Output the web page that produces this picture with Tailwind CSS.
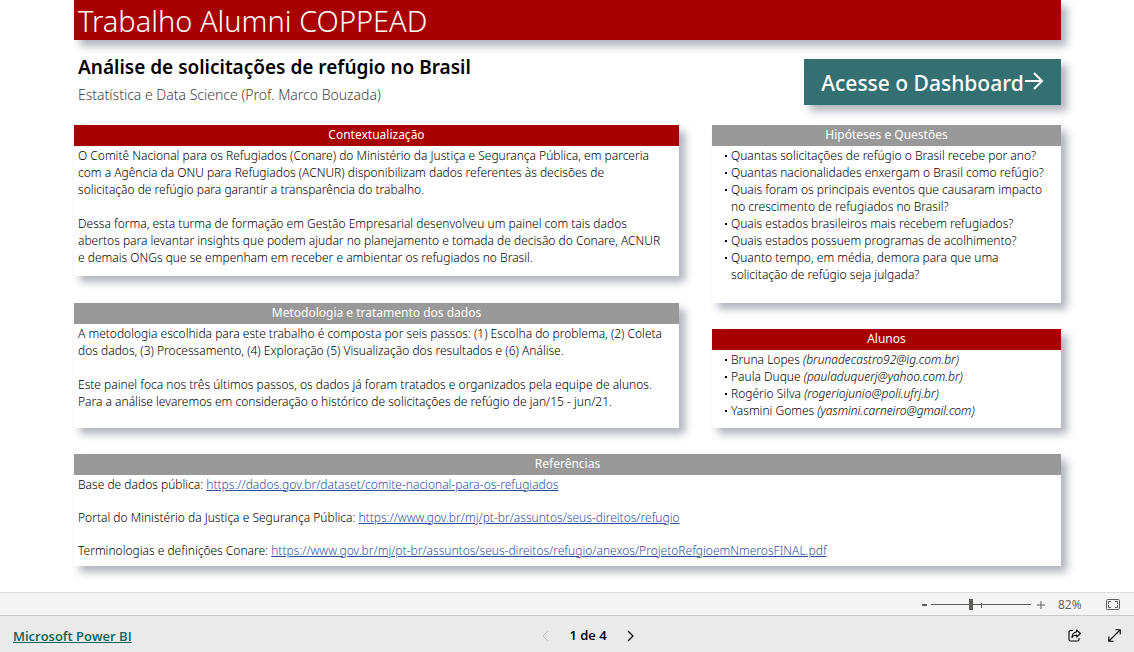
<!DOCTYPE html>
<html lang="pt-BR">
<head>
<meta charset="utf-8">
<meta name="viewport" content="width=device-width, initial-scale=1">
<title>Trabalho Alumni COPPEAD</title>
<script src="https://cdn.jsdelivr.net/npm/@tailwindcss/browser@4"></script>
</head>
<body class="flex min-h-screen flex-col bg-white font-['Noto_Sans','Open_Sans',sans-serif] text-black">
<main class="flex grow flex-col pr-[73px] pb-[26px] pl-[74px]">
  <h1 class="h-10 bg-[#a80000] px-1 text-[29px] leading-[42px] font-light text-white shadow-[6px_6px_8px_rgba(50,55,75,0.38)]">Trabalho Alumni COPPEAD</h1>

  <header class="flex items-start justify-between pt-[19px] pb-5">
    <div class="px-1">
      <h2 class="text-[19px] leading-[17px] font-semibold">Análise de solicitações de refúgio no Brasil</h2>
      <p class="mt-[9px] text-[14px] leading-5 font-light text-[#444]">Estatística e Data Science (Prof. Marco Bouzada)</p>
    </div>
    <button type="button" class="flex h-[46px] w-[257px] items-center justify-center bg-[#346f72] pt-1 text-[21px] font-medium text-white shadow-[6px_6px_8px_rgba(50,55,75,0.38)]">Acesse o Dashboard<svg class="mb-1.5 h-5 w-5" viewBox="0 0 20 20" fill="none" stroke="currentColor" stroke-width="2" aria-hidden="true"><path d="M1 10h17M10 2l8 8-8 8"/></svg></button>
  </header>

  <div class="grid grid-cols-[minmax(0,605fr)_minmax(0,349fr)] gap-x-[33px]">
    <div class="flex flex-col gap-[27px]">
      <section class="grow bg-white shadow-[6px_6px_8px_rgba(50,55,75,0.38)]">
        <h3 class="h-[21px] bg-[#a80000] text-center text-[12px] leading-5 text-white">Contextualização</h3>
        <div class="flex flex-col gap-[17px] px-1 pt-px pb-[10px] text-[12px] leading-[17px] font-light">
          <p>O Comitê Nacional para os Refugiados (Conare) do Ministério da Justiça e Segurança Pública, em parceria<br>com a Agência da ONU para Refugiados (ACNUR) disponibilizam dados referentes às decisões de<br>solicitação de refúgio para garantir a transparência do trabalho.</p>
          <p>Dessa forma, esta turma de formação em Gestão Empresarial desenvolveu um painel com tais dados<br>abertos para levantar insights que podem ajudar no planejamento e tomada de decisão do Conare, ACNUR<br>e demais ONGs que se empenham em receber e ambientar os refugiados no Brasil.</p>
        </div>
      </section>
      <section class="bg-white shadow-[6px_6px_8px_rgba(50,55,75,0.38)]">
        <h3 class="h-[21px] bg-[#999] text-center text-[12px] leading-5 text-white">Metodologia e tratamento dos dados</h3>
        <div class="flex flex-col gap-[17px] px-1 pt-px pb-[18px] text-[12px] leading-[17px] font-light">
          <p>A metodologia escolhida para este trabalho é composta por seis passos: (1) Escolha do problema, (2) Coleta<br>dos dados, (3) Processamento, (4) Exploração (5) Visualização dos resultados e (6) Análise.</p>
          <p>Este painel foca nos três últimos passos, os dados já foram tratados e organizados pela equipe de alunos.<br>Para a análise levaremos em consideração o histórico de solicitações de refúgio de jan/15 - jun/21.</p>
        </div>
      </section>
    </div>
    <div class="flex flex-col gap-[26px]">
      <section class="grow bg-white shadow-[6px_6px_8px_rgba(50,55,75,0.38)]">
        <h3 class="h-[21px] bg-[#999] text-center text-[12px] leading-5 text-white">Hipóteses e Questões</h3>
        <ul class="pt-px pr-2 pl-[19px] text-[12px] leading-[17px] font-light">
          <li class="relative before:absolute before:top-2 before:-left-1.5 before:size-0.5 before:bg-black">Quantas solicitações de refúgio o Brasil recebe por ano?</li>
          <li class="relative before:absolute before:top-2 before:-left-1.5 before:size-0.5 before:bg-black">Quantas nacionalidades enxergam o Brasil como refúgio?</li>
          <li class="relative before:absolute before:top-2 before:-left-1.5 before:size-0.5 before:bg-black">Quais foram os principais eventos que causaram impacto<br>no crescimento de refugiados no Brasil?</li>
          <li class="relative before:absolute before:top-2 before:-left-1.5 before:size-0.5 before:bg-black">Quais estados brasileiros mais recebem refugiados?</li>
          <li class="relative before:absolute before:top-2 before:-left-1.5 before:size-0.5 before:bg-black">Quais estados possuem programas de acolhimento?</li>
          <li class="relative before:absolute before:top-2 before:-left-1.5 before:size-0.5 before:bg-black">Quanto tempo, em média, demora para que uma<br>solicitação de refúgio seja julgada?</li>
        </ul>
      </section>
      <section class="bg-white shadow-[6px_6px_8px_rgba(50,55,75,0.38)]">
        <h3 class="h-[21px] bg-[#a80000] text-center text-[12px] leading-5 text-white">Alunos</h3>
        <ul class="pt-px pr-2 pb-[9px] pl-[19px] text-[12px] leading-[17px] font-light">
          <li class="relative before:absolute before:top-2 before:-left-1.5 before:size-0.5 before:bg-black">Bruna Lopes <i>(brunadecastro92@ig.com.br)</i></li>
          <li class="relative before:absolute before:top-2 before:-left-1.5 before:size-0.5 before:bg-black">Paula Duque <i>(pauladuquerj@yahoo.com.br)</i></li>
          <li class="relative before:absolute before:top-2 before:-left-1.5 before:size-0.5 before:bg-black">Rogério Silva <i>(rogeriojunio@poli.ufrj.br)</i></li>
          <li class="relative before:absolute before:top-2 before:-left-1.5 before:size-0.5 before:bg-black">Yasmini Gomes <i>(yasmini.carneiro@gmail.com)</i></li>
        </ul>
      </section>
    </div>
  </div>

  <section class="mt-[26px] bg-white shadow-[6px_6px_8px_rgba(50,55,75,0.38)]">
    <h3 class="h-[21px] bg-[#999] text-center text-[12px] leading-5 text-white">Referências</h3>
    <div class="flex flex-col gap-4 px-1 pt-px pb-[7px] text-[12px] leading-[17px] font-light">
      <p>Base de dados pública: <a class="text-[#2b4fa0] underline" href="https://dados.gov.br/dataset/comite-nacional-para-os-refugiados">https://dados.gov.br/dataset/comite-nacional-para-os-refugiados</a></p>
      <p>Portal do Ministério da Justiça e Segurança Pública: <a class="text-[#2b4fa0] underline" href="https://www.gov.br/mj/pt-br/assuntos/seus-direitos/refugio">https://www.gov.br/mj/pt-br/assuntos/seus-direitos/refugio</a></p>
      <p>Terminologias e definições Conare: <a class="text-[#2b4fa0] underline" href="https://www.gov.br/mj/pt-br/assuntos/seus-direitos/refugio/anexos/ProjetoRefgioemNmerosFINAL.pdf">https://www.gov.br/mj/pt-br/assuntos/seus-direitos/refugio/anexos/ProjetoRefgioemNmerosFINAL.pdf</a></p>
    </div>
  </section>
</main>

<div class="flex h-[23px] items-center justify-end border-t border-[#dedede] bg-[#f4f4f4] pt-px pr-[14px] text-[#605e5c]">
  <button type="button" aria-label="Reduzir" class="flex h-4 w-2.5 items-center justify-center"><svg class="h-2.5 w-2.5" viewBox="0 0 10 10" aria-hidden="true"><path d="M3 4h5v2H3z" fill="currentColor"/></svg></button>
  <div class="relative mr-1 ml-0.5 flex h-4 w-[100px] items-center">
    <input type="range" min="0" max="100" value="40" aria-label="Zoom" class="h-3 w-full appearance-none bg-transparent [&::-webkit-slider-runnable-track]:h-px [&::-webkit-slider-runnable-track]:bg-[#605e5c] [&::-webkit-slider-thumb]:-mt-[5px] [&::-webkit-slider-thumb]:h-[11px] [&::-webkit-slider-thumb]:w-1 [&::-webkit-slider-thumb]:appearance-none [&::-webkit-slider-thumb]:bg-[#605e5c]">
    <span class="absolute top-1.5 left-1/2 h-[5px] w-px bg-[#605e5c]"></span>
  </div>
  <button type="button" aria-label="Ampliar" class="flex h-4 w-3 items-center justify-center"><svg class="h-2 w-2" viewBox="0 0 8 8" stroke="currentColor" aria-hidden="true"><path d="M0 4h8M4 0v8"/></svg></button>
  <span class="ml-[11px] w-12 font-['Open_Sans'] text-[12px] leading-4">82%</span>
  <button type="button" aria-label="Ajustar à página" class="flex"><svg class="h-[11px] w-[14px]" viewBox="0 0 14 11" fill="none" stroke="currentColor" aria-hidden="true"><rect x=".5" y=".5" width="13" height="10" rx="1"/><path d="M5 2.5H2.5V5M9 2.5h2.500V5M5 8.500H2.500V6M9 8.500h2.500V6"/></svg></button>
</div>

<footer class="grid h-[37px] grid-cols-3 items-center border-t border-[#c8c8c8] bg-[#eaeaea] px-[13px] pt-[3px]">
  <a class="justify-self-start font-['Open_Sans'] text-[13px] leading-[18px] font-semibold text-[#0f6257] underline" href="https://powerbi.microsoft.com">Microsoft Power BI</a>
  <nav class="flex items-center justify-center gap-5 pl-[42px] font-['Open_Sans'] text-[13px] font-semibold" aria-label="Páginas">
    <button type="button" aria-label="Anterior" disabled class="text-[#c0c0c0]"><svg class="h-3 w-2" viewBox="0 0 8 12" fill="none" stroke="currentColor" aria-hidden="true"><path d="M7 1L2 6l5 5"/></svg></button>
    <span>1 de 4</span>
    <button type="button" aria-label="Próxima"><svg class="h-3 w-2" viewBox="0 0 8 12" fill="none" stroke="currentColor" stroke-width="1.2" aria-hidden="true"><path d="M1 1l5 5-5 5"/></svg></button>
  </nav>
  <div class="flex items-center justify-end gap-[26px] text-black">
    <button type="button" aria-label="Compartilhar"><svg class="h-[13px] w-[14px]" viewBox="0 0 14 13" fill="none" stroke="currentColor" stroke-width="1.1" stroke-linejoin="round" aria-hidden="true"><path d="M5 1.500H2.500a1.500 1.500 0 0 0-1.500 1.500v7.500A1.500 1.500 0 0 0 2.500 12h7a1.500 1.500 0 0 0 1.500-1.500V9"/><path d="M8.500 1l4 3.500-4 3.500V6C6.500 6 5 6.700 4 8.500 4.200 5.300 6 3.300 8.500 3z"/></svg></button>
    <button type="button" aria-label="Tela cheia"><svg class="h-[13px] w-[13px]" viewBox="0 0 13 13" fill="none" stroke="currentColor" stroke-width="1.1" aria-hidden="true"><path d="M1 12L12 1M7.500.8h4.700v4.700M.8 7.500v4.700h4.700"/></svg></button>
  </div>
</footer>
</body>
</html>
